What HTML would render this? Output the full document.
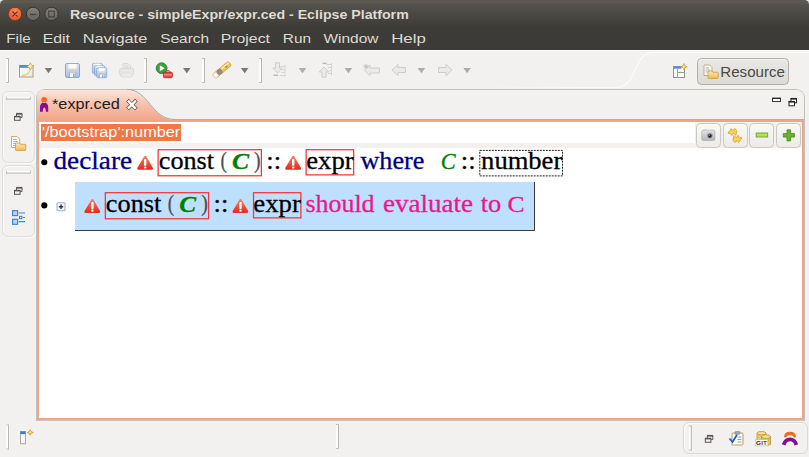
<!DOCTYPE html>
<html><head><meta charset="utf-8">
<style>
*{box-sizing:border-box;margin:0;padding:0}
html,body{width:809px;height:457px;overflow:hidden;background:#f2f1f0;font-family:"Liberation Sans",sans-serif;}
.a{position:absolute}
svg text{white-space:pre}
</style></head><body>
<!-- title + menu -->
<div class="a" style="left:0;top:0;width:809px;height:30px;background:#e6e6e6"></div>
<div class="a" style="left:0;top:0;width:809px;height:28px;background:linear-gradient(#58564f 0,#5d5b54 6%,#55534d 14%,#4b4a44 45%,#403f3a 82%,#3c3b37 100%);border-radius:4.500px 4.500px 0 0"></div>
<div class="a" style="left:0;top:28px;width:809px;height:22px;background:#3c3b37"></div>
<!-- toolbar -->
<div class="a" style="left:0;top:50px;width:809px;height:40px;background:#f2f1f0;border-top:1px solid #fbfbfb"></div>
<div class="a" style="left:440px;top:86.500px;width:180px;height:1.300px;background:linear-gradient(90deg,rgba(253,253,253,0) 20%,rgba(253,253,253,0.8) 90%)"></div>
<!-- left trim boxes -->
<div class="a" style="left:2px;top:91px;width:33px;height:72px;border:1px solid #dfddd9;border-radius:6px;box-shadow:inset 1px 1px 0 #fafafa,1px 1px 0 #fafafa"></div>
<div class="a" style="left:2px;top:165px;width:33px;height:72px;border:1px solid #dfddd9;border-radius:6px;box-shadow:inset 1px 1px 0 #fafafa,1px 1px 0 #fafafa"></div>
<!-- editor panel -->
<div class="a" style="left:36px;top:89px;width:769px;height:331.500px;border:1px solid #c3c0ba;border-bottom:1px solid #c9c6c0;border-radius:9px 9px 0 0;background:#f2f1f0"></div>
<div class="a" style="left:37px;top:90px;width:767px;height:31px;border-radius:8px 8px 0 0;background:#f2f1f0"></div>
<!-- active tab -->
<svg class="a" style="left:37px;top:89px" width="150" height="32">
 <defs><linearGradient id="tg" x1="0" y1="0" x2="0" y2="1"><stop offset="0" stop-color="#fce6dc"/><stop offset="0.5" stop-color="#f6bfa8"/><stop offset="1" stop-color="#f2a487"/></linearGradient></defs>
 <path d="M0 32 V9 Q0 1 8 1 H90 C112 1 114 31 138 31 L150 32 Z" fill="url(#tg)"/>
 <path d="M90 0.500 C112 0.500 114 30.500 138 30.500" fill="none" stroke="#aba8a2" stroke-width="1"/>
</svg>
<div class="a" style="left:172px;top:119.200px;width:632px;height:0.800px;background:#b3b0aa"></div>
<div class="a" style="left:37px;top:119.900px;width:767.300px;height:299.700px;border:2.300px solid #f2a487;border-top-width:2.100px;background:#fff"></div>
<!-- path row -->
<div class="a" style="left:39px;top:122px;width:763px;height:26.400px;background:#f2f1f0"></div>
<div class="a" style="left:39px;top:122px;width:656px;height:21px;background:#fff"></div>
<div class="a" style="left:41px;top:124px;width:140px;height:17px;background:#f07746"></div>
<!-- view buttons -->
<div class="a" style="left:696px;top:123px;width:25px;height:25px;border:1px solid #cbc8c2;border-radius:4.500px;background:linear-gradient(#f9f9f8,#ecebe8)"></div><div class="a" style="left:723px;top:123px;width:25px;height:25px;border:1px solid #cbc8c2;border-radius:4.500px;background:linear-gradient(#f9f9f8,#ecebe8)"></div><div class="a" style="left:749px;top:123px;width:25px;height:25px;border:1px solid #cbc8c2;border-radius:4.500px;background:linear-gradient(#f9f9f8,#ecebe8)"></div><div class="a" style="left:776px;top:123px;width:25px;height:25px;border:1px solid #cbc8c2;border-radius:4.500px;background:linear-gradient(#f9f9f8,#ecebe8)"></div>
<!-- resource button -->
<div class="a" style="left:697px;top:58px;width:92px;height:27px;border:1px solid #b3b0a9;border-radius:4.500px;background:linear-gradient(#e9e8e5,#dddbd7);box-shadow:inset 0 1px 0 #f3f2f0"></div>
<!-- content boxes -->
<div class="a" style="left:75px;top:182px;width:460px;height:48.600px;background:#bfdfff;border-right:1.300px solid #3a3a3a;border-bottom:1.600px solid #3a3a3a"></div>
<!-- status trim -->
<div class="a" style="left:683px;top:422px;width:125px;height:32px;border:1px solid #dcdad6;border-radius:6px;box-shadow:inset 1px 1px 0 #fafafa"></div>
<svg class="a" style="left:0;top:0" width="809" height="457" viewBox="0 0 809 457">
<rect x="158.12" y="149.72" width="103.25" height="26.05" fill="none" stroke="#f83232" stroke-width="1.25"/>
<rect x="306.12" y="149.72" width="47.55" height="25.15" fill="none" stroke="#f83232" stroke-width="1.25"/>
<rect x="105.33" y="192.72" width="103.25" height="26.05" fill="none" stroke="#f83232" stroke-width="1.25"/>
<rect x="253.53" y="192.72" width="47.35" height="25.15" fill="none" stroke="#f83232" stroke-width="1.25"/>
<rect x="479.800" y="150.400" width="82.700" height="25.500" fill="none" stroke="#222" stroke-width="1" stroke-dasharray="2 1"/>
<circle cx="44.3" cy="162.2" r="3.05" fill="#000"/>
<circle cx="44.3" cy="205.4" r="3.05" fill="#000"/>
<text x="69.99" y="19.3" textLength="338.76" lengthAdjust="spacingAndGlyphs" font-family="Liberation Sans" font-size="13.5" font-weight="bold" font-style="normal" fill="#dfdbd2">Resource - simpleExpr/expr.ced - Eclipse Platform</text>
<text x="6.25" y="42.9" textLength="24.54" lengthAdjust="spacingAndGlyphs" font-family="Liberation Sans" font-size="13.4" font-weight="normal" font-style="normal" fill="#dfdbd2">File</text>
<text x="42.69" y="42.9" textLength="27.31" lengthAdjust="spacingAndGlyphs" font-family="Liberation Sans" font-size="13.4" font-weight="normal" font-style="normal" fill="#dfdbd2">Edit</text>
<text x="82.71" y="42.9" textLength="64.57" lengthAdjust="spacingAndGlyphs" font-family="Liberation Sans" font-size="13.4" font-weight="normal" font-style="normal" fill="#dfdbd2">Navigate</text>
<text x="160.22" y="42.9" textLength="48.82" lengthAdjust="spacingAndGlyphs" font-family="Liberation Sans" font-size="13.4" font-weight="normal" font-style="normal" fill="#dfdbd2">Search</text>
<text x="220.72" y="42.9" textLength="49.28" lengthAdjust="spacingAndGlyphs" font-family="Liberation Sans" font-size="13.4" font-weight="normal" font-style="normal" fill="#dfdbd2">Project</text>
<text x="282.89" y="42.9" textLength="28.19" lengthAdjust="spacingAndGlyphs" font-family="Liberation Sans" font-size="13.4" font-weight="normal" font-style="normal" fill="#dfdbd2">Run</text>
<text x="323.5" y="42.9" textLength="55.0" lengthAdjust="spacingAndGlyphs" font-family="Liberation Sans" font-size="13.4" font-weight="normal" font-style="normal" fill="#dfdbd2">Window</text>
<text x="391.17" y="42.9" textLength="34.63" lengthAdjust="spacingAndGlyphs" font-family="Liberation Sans" font-size="13.4" font-weight="normal" font-style="normal" fill="#dfdbd2">Help</text>
<text x="52.04" y="109.0" textLength="67.82" lengthAdjust="spacingAndGlyphs" font-family="Liberation Sans" font-size="14.1" font-weight="normal" font-style="normal" fill="#1c1c1c">*expr.ced</text>
<text x="41.94" y="136.6" textLength="138.31" lengthAdjust="spacingAndGlyphs" font-family="Liberation Sans" font-size="13.8" font-weight="normal" font-style="normal" fill="#ffffff">'/bootstrap':number</text>
<text x="720.37" y="76.8" textLength="64.46" lengthAdjust="spacingAndGlyphs" font-family="Liberation Sans" font-size="13.8" font-weight="normal" font-style="normal" fill="#4a4843">Resource</text>
<text x="53.48" y="168.9" textLength="78.6" lengthAdjust="spacingAndGlyphs" font-family="Liberation Serif" font-size="24.5" font-weight="normal" font-style="normal" fill="#00007f" stroke="#00007f" stroke-width="0.28">declare</text>
<text x="158.78" y="168.9" textLength="55.23" lengthAdjust="spacingAndGlyphs" font-family="Liberation Serif" font-size="24.5" font-weight="normal" font-style="normal" fill="#000" stroke="#000" stroke-width="0.28">const</text>
<text x="220.51" y="167.6" textLength="6.35" lengthAdjust="spacingAndGlyphs" font-family="Liberation Serif" font-size="22.3" font-weight="normal" font-style="normal" fill="#4d4d4d" stroke="#4d4d4d" stroke-width="0.28">(</text>
<text x="231.91" y="169.1" textLength="17.13" lengthAdjust="spacingAndGlyphs" font-family="Liberation Serif" font-size="22.8" font-weight="bold" font-style="italic" fill="#008000" stroke="#008000" stroke-width="0.28">C</text>
<text x="254.05" y="167.6" textLength="6.58" lengthAdjust="spacingAndGlyphs" font-family="Liberation Serif" font-size="22.3" font-weight="normal" font-style="normal" fill="#4d4d4d" stroke="#4d4d4d" stroke-width="0.28">)</text>
<text x="266.32" y="168.9" textLength="14.78" lengthAdjust="spacingAndGlyphs" font-family="Liberation Serif" font-size="24.5" font-weight="normal" font-style="normal" fill="#000" stroke="#000" stroke-width="0.28">::</text>
<text x="306.27" y="168.9" textLength="47.33" lengthAdjust="spacingAndGlyphs" font-family="Liberation Serif" font-size="24.5" font-weight="normal" font-style="normal" fill="#000" stroke="#000" stroke-width="0.28">expr</text>
<text x="360.45" y="168.9" textLength="63.91" lengthAdjust="spacingAndGlyphs" font-family="Liberation Serif" font-size="24.5" font-weight="normal" font-style="normal" fill="#00007f" stroke="#00007f" stroke-width="0.28">where</text>
<text x="440.78" y="169.1" textLength="14.95" lengthAdjust="spacingAndGlyphs" font-family="Liberation Serif" font-size="22.8" font-weight="normal" font-style="italic" fill="#008000" stroke="#008000" stroke-width="0.28">C</text>
<text x="460.89" y="168.9" textLength="14.91" lengthAdjust="spacingAndGlyphs" font-family="Liberation Serif" font-size="24.5" font-weight="normal" font-style="normal" fill="#000" stroke="#000" stroke-width="0.28">::</text>
<text x="481.14" y="168.9" textLength="81.11" lengthAdjust="spacingAndGlyphs" font-family="Liberation Serif" font-size="24.5" font-weight="normal" font-style="normal" fill="#000" stroke="#000" stroke-width="0.28">number</text>
<text x="105.83" y="212.0" textLength="55.47" lengthAdjust="spacingAndGlyphs" font-family="Liberation Serif" font-size="24.5" font-weight="normal" font-style="normal" fill="#000" stroke="#000" stroke-width="0.28">const</text>
<text x="167.79" y="210.7" textLength="6.35" lengthAdjust="spacingAndGlyphs" font-family="Liberation Serif" font-size="22.3" font-weight="normal" font-style="normal" fill="#4d4d4d" stroke="#4d4d4d" stroke-width="0.28">(</text>
<text x="179.23" y="212.2" textLength="16.87" lengthAdjust="spacingAndGlyphs" font-family="Liberation Serif" font-size="22.8" font-weight="bold" font-style="italic" fill="#008000" stroke="#008000" stroke-width="0.28">C</text>
<text x="201.33" y="210.7" textLength="6.67" lengthAdjust="spacingAndGlyphs" font-family="Liberation Serif" font-size="22.3" font-weight="normal" font-style="normal" fill="#4d4d4d" stroke="#4d4d4d" stroke-width="0.28">)</text>
<text x="213.59" y="212.0" textLength="14.78" lengthAdjust="spacingAndGlyphs" font-family="Liberation Serif" font-size="24.5" font-weight="normal" font-style="normal" fill="#000" stroke="#000" stroke-width="0.28">::</text>
<text x="253.32" y="212.0" textLength="47.58" lengthAdjust="spacingAndGlyphs" font-family="Liberation Serif" font-size="24.5" font-weight="normal" font-style="normal" fill="#000" stroke="#000" stroke-width="0.28">expr</text>
<text x="305.48" y="212.0" textLength="69.07" lengthAdjust="spacingAndGlyphs" font-family="Liberation Serif" font-size="24.5" font-weight="normal" font-style="normal" fill="#f0148c" stroke="#f0148c" stroke-width="0.28">should</text>
<text x="382.98" y="212.0" textLength="89.94" lengthAdjust="spacingAndGlyphs" font-family="Liberation Serif" font-size="24.5" font-weight="normal" font-style="normal" fill="#f0148c" stroke="#f0148c" stroke-width="0.28">evaluate</text>
<text x="480.73" y="212.0" textLength="20.53" lengthAdjust="spacingAndGlyphs" font-family="Liberation Serif" font-size="24.5" font-weight="normal" font-style="normal" fill="#f0148c" stroke="#f0148c" stroke-width="0.28">to</text>
<text x="507.49" y="212.2" textLength="17.12" lengthAdjust="spacingAndGlyphs" font-family="Liberation Serif" font-size="22.8" font-weight="normal" font-style="normal" fill="#f0148c" stroke="#f0148c" stroke-width="0.28">C</text>
<defs>
 <radialGradient id="gClose" cx="0.5" cy="0.3" r="0.8"><stop offset="0" stop-color="#f58a5c"/><stop offset="1" stop-color="#dd4f20"/></radialGradient>
 <linearGradient id="gBtn" x1="0" y1="0" x2="0" y2="1"><stop offset="0" stop-color="#838179"/><stop offset="1" stop-color="#65635c"/></linearGradient>
 <linearGradient id="gWarn" x1="0" y1="0" x2="0" y2="1"><stop offset="0" stop-color="#f67a66"/><stop offset="1" stop-color="#e6301f"/></linearGradient>
 <linearGradient id="gFloppy" x1="0" y1="0" x2="0" y2="1"><stop offset="0" stop-color="#dbe4f4"/><stop offset="1" stop-color="#a8bfe5"/></linearGradient>
 <linearGradient id="gFolder" x1="0" y1="0" x2="0" y2="1"><stop offset="0" stop-color="#fdeab0"/><stop offset="1" stop-color="#efbd52"/></linearGradient>
 <linearGradient id="gWin" x1="0" y1="0" x2="1" y2="1"><stop offset="0" stop-color="#ffffff"/><stop offset="1" stop-color="#d9e6f8"/></linearGradient>
 <g id="dd"><path d="M0 0 H7.6 L3.8 5.2 Z"/></g>
 <g id="handle"><rect x="0" y="0" width="2" height="25" fill="#fdfdfd"/><rect x="2" y="0" width="1" height="25" fill="#b9b6b0"/><rect x="0" y="0" width="3" height="1" fill="#c4c1bb"/><rect x="0" y="24" width="3" height="1" fill="#c4c1bb"/></g>
 <g id="warn"><path d="M8.300 1.800 L14.800 13.200 H1.600 Z" fill="url(#gWarn)" stroke="url(#gWarn)" stroke-width="2.600" stroke-linejoin="round"/><rect x="7.100" y="3.600" width="2.400" height="6.800" rx="0.900" fill="#fff"/><rect x="7.100" y="11.100" width="2.400" height="2.100" rx="0.900" fill="#fff"/></g>
 <g id="restore" fill="none" stroke="#5b564e"><path d="M2.5 3 V0.8 H8 V4.5 H6.5" stroke-width="1"/><path d="M2.2 0.7 H8.3" stroke-width="1.6"/><rect x="0.5" y="3.5" width="5.6" height="3.8" stroke-width="1" fill="#f2f1f0"/><path d="M0.2 3.6 H6.4" stroke-width="1.6"/></g>
 <g id="hhandle"><rect x="0" y="0" width="25" height="2" fill="#fdfdfd"/><rect x="0" y="1.800" width="25" height="1" fill="#b9b6b0"/><rect x="0" y="0" width="1" height="2.500" fill="#c4c1bb"/><rect x="24" y="0" width="1" height="2.500" fill="#c4c1bb"/></g>
 <g id="cedicon"><ellipse cx="4.300" cy="2.900" rx="2.800" ry="2.800" fill="#f96a12"/><path d="M0.200 14.900 V10.500 C0.200 7.200 1.900 5.600 4.300 5.600 C6.700 5.600 8.400 7.200 8.400 10.500 V14.900 H6.100 C6.100 12.500 5.400 10.700 4.500 10.700 C3.600 10.700 3 12.500 3 14.900 Z" fill="#860d96"/><circle cx="4.300" cy="5.600" r="0.700" fill="#fbe0d4"/></g>
 <g id="floppy"><rect x="0.5" y="0.5" width="14" height="14" rx="1.6" fill="url(#gFloppy)" stroke="#7c9dd0" stroke-width="0.900"/><rect x="3.500" y="0.9" width="8" height="6" fill="#fbfcfe"/><rect x="3.5" y="5.6" width="8" height="1.2" fill="#e6cf9c"/><rect x="4.6" y="9.3" width="6" height="5" fill="#f4f7fc" stroke="#7c9ccc" stroke-width="0.6"/><rect x="8" y="10.6" width="1.6" height="3.4" fill="#8aa6d4"/><rect x="4.6" y="9.3" width="6" height="1" fill="#e6cf9c"/></g>
</defs>
<!-- window buttons -->
<circle cx="15" cy="13.900" r="6.700" fill="url(#gClose)" stroke="#8f3415" stroke-width="1"/>
<path d="M12.800 11.800 L17.200 16.200 M17.200 11.800 L12.800 16.200" stroke="#6e2a12" stroke-width="1.200" stroke-linecap="round"/>
<circle cx="33.100" cy="13.900" r="6.700" fill="url(#gBtn)" stroke="#34332f" stroke-width="1"/>
<path d="M30 14.5 H36.200" stroke="#46443f" stroke-width="1.500"/>
<circle cx="51.500" cy="13.900" r="6.700" fill="url(#gBtn)" stroke="#34332f" stroke-width="1"/>
<rect x="48.700" y="11.200" width="5.600" height="5.600" fill="none" stroke="#46443f" stroke-width="1.200"/>
<!-- toolbar handles -->
<use href="#handle" x="6" y="58"/><use href="#handle" x="144" y="58"/><use href="#handle" x="202" y="58"/><use href="#handle" x="259" y="58"/>
<!-- new wizard -->
<g transform="translate(19,63)">
 <rect x="0.500" y="2.500" width="13.500" height="11.500" fill="url(#gWin)" stroke="#b79a78" stroke-width="1"/>
 <rect x="0.500" y="2.200" width="10" height="2.600" fill="#4a8ad0"/>
 <path d="M3 12.500 C8 12.500 11 9 11.600 4.500" fill="none" stroke="#f4cf58" stroke-width="1.300"/>
 <path d="M11.400 -0.200 L12.600 2.200 L15 3.400 L12.600 4.600 L11.400 7 L10.200 4.600 L7.800 3.400 L10.200 2.200 Z" fill="#fdf0b8" stroke="#cf9f34" stroke-width="0.800"/>
</g>
<use href="#dd" x="44.700" y="68" fill="#7a7872"/>
<!-- save / save all / print -->
<use href="#floppy" x="65" y="63"/>
<g transform="translate(92,63)"><g transform="scale(0.72)"><use href="#floppy" x="0" y="0"/><use href="#floppy" x="3" y="3"/><use href="#floppy" x="6" y="6"/></g></g>
<g transform="translate(119,63)" opacity="0.85">
 <path d="M4 0.500 H9 L11.500 3 V7 H4 Z" fill="#e9e8e6" stroke="#d2d0cc" stroke-width="0.800"/>
 <rect x="0.500" y="5.500" width="14" height="6.500" rx="1.500" fill="#e7e6e3" stroke="#d3d1cd" stroke-width="0.800"/>
 <rect x="2" y="10" width="11" height="4" rx="1" fill="#ecebe9" stroke="#d6d4d0" stroke-width="0.700"/>
 <path d="M5.500 3 H9.500 M5.500 4.800 H9.500" stroke="#cfcdc9" stroke-width="0.700"/>
</g>
<!-- run external tools -->
<circle cx="161.600" cy="68.200" r="5.400" fill="#3fa043" stroke="#2a7a2e" stroke-width="0.900"/>
<path d="M159.800 65.200 L164.600 68.200 L159.800 71.200 Z" fill="#fff"/>
<g transform="translate(163,70.500)"><rect x="2.800" y="0.300" width="4" height="2.500" rx="0.800" fill="none" stroke="#b8282a" stroke-width="1"/><rect x="0.400" y="1.800" width="9" height="5.400" rx="1" fill="#e0484a" stroke="#b8282a" stroke-width="0.800"/><rect x="0.800" y="3.900" width="8.200" height="0.900" fill="#f6b0b0"/></g>
<use href="#dd" x="183" y="68" fill="#7a7872"/>
<!-- torch -->
<g transform="translate(221.800,70) rotate(-40)">
 <rect x="-10" y="-2.600" width="20.500" height="5.200" rx="1.600" fill="#f3c64e" stroke="#c89a2e" stroke-width="0.700"/>
 <rect x="-10" y="-2.600" width="4.200" height="5.200" rx="1.300" fill="#fbf6ea" stroke="#d8c79a" stroke-width="0.500"/>
 <ellipse cx="-2.800" cy="0" rx="2.900" ry="2.900" fill="#8f8e8a"/>
 <rect x="0.300" y="-1.900" width="9.500" height="1.400" fill="#fdeeb0"/>
 <rect x="4.500" y="-0.300" width="2.200" height="1.400" fill="#5f86c4"/>
</g>
<use href="#dd" x="240.900" y="68" fill="#7a7872"/>
<!-- next/prev annotation (disabled) -->
<g fill="#eceae8" stroke="#cbc9c5" stroke-width="0.900" stroke-linejoin="round">
 <path d="M275.500 62.800 H279.500 V68 H282.200 L277.500 73 L272.800 68 H275.500 Z"/>
 <path d="M322 77.200 H326 V72 H328.700 L324 67 L319.300 72 H322 Z"/>
 <path d="M364.500 70.300 L370 65 V68 H379.500 V73 H370 V75.600 Z"/>
 <path d="M392 70 L398 64.500 V67.500 H405.500 V72.500 H398 V75.500 Z"/>
 <path d="M452 70 L446 64.500 V67.500 H438.500 V72.500 H446 V75.500 Z"/>
</g>
<g stroke="#d2d0cc" stroke-width="0.900" fill="none">
 <path d="M285 64.500 V77 M280.500 66.500 H284.500 M281.500 69.500 H284.500 M281.500 72.500 H284.500 M279.500 75.500 H284.500"/>
 <path d="M273.500 75.200 H278" stroke="#b5b3ae" stroke-width="1.300"/>
 <path d="M331.500 63 V75.500 M326.500 64.500 H331 M328 67.500 H331 M329.500 70.500 H331 M328 73.500 H331"/>
 <path d="M322.500 63.300 H326.500" stroke="#b5b3ae" stroke-width="1.300"/>
 <path d="M364 64.500 L368 68.500 M368 64.500 L364 68.500 M366 63.800 V69.200 M363.500 66.500 H368.500" stroke="#bdbbb6" stroke-width="0.800"/>
</g>
<use href="#dd" x="298.700" y="68" fill="#aeaca7"/>
<use href="#dd" x="344.600" y="68" fill="#aeaca7"/>
<use href="#dd" x="417.600" y="68" fill="#aeaca7"/>
<use href="#dd" x="463.300" y="68" fill="#aeaca7"/>
<!-- perspective curve -->
<path d="M617 87.200 C638 87.200 632 52.400 654 52.400 H809" fill="none" stroke="#fdfdfd" stroke-width="1.200" stroke-opacity="0.850"/>
<!-- open perspective -->
<g transform="translate(673,64)">
 <rect x="0.500" y="2.500" width="11" height="11" fill="#fff" stroke="#96928a" stroke-width="1"/>
 <rect x="0.500" y="2.300" width="8" height="2.400" fill="#5b8ed0"/>
 <path d="M4.500 5 V13.500 M4.500 8.500 H11.500" stroke="#a39f97" stroke-width="1"/>
 <path d="M11 -0.500 L12 1.800 L14.300 2.800 L12 3.800 L11 6.100 L10 3.800 L7.700 2.800 L10 1.800 Z" fill="#f9df7e" stroke="#c7972e" stroke-width="0.700"/>
</g>
<!-- resource perspective icon -->
<g id="resicon" transform="translate(703.500,64.500)">
 <path d="M0.500 0.500 H6 L8.500 3 V11 H0.500 Z" fill="#fdfdfd" stroke="#c3a46a" stroke-width="0.900"/>
 <path d="M2 3.500 H5.500 M2 5.500 H6.500 M2 7.500 H4" stroke="#7ea2d8" stroke-width="0.800"/>
 <path d="M4.500 6.500 H8.500 L9.500 7.800 H14 Q14.800 7.800 14.800 8.600 V13.200 Q14.800 14 14 14 H5.300 Q4.500 14 4.500 13.200 Z" fill="url(#gFolder)" stroke="#c99a3c" stroke-width="0.800"/>
</g>
<!-- min / max of editor area -->
<rect x="772.500" y="98.500" width="8" height="3" fill="#fff" stroke="#333" stroke-width="1"/>
<path d="M772 98.300 H781" stroke="#222" stroke-width="1.300"/>
<g transform="translate(788.500,98)"><rect x="2.500" y="0.800" width="5.500" height="4" fill="#fff" stroke="#222" stroke-width="1"/><path d="M2 0.700 H8.500" stroke="#222" stroke-width="1.500"/><rect x="0.500" y="3.800" width="5.500" height="4" fill="#fff" stroke="#222" stroke-width="1"/><path d="M0 3.700 H6.500" stroke="#222" stroke-width="1.500"/></g>
<!-- left trim -->
<use href="#hhandle" x="6" y="96.800"/><use href="#hhandle" x="6" y="170.800"/>
<use href="#restore" x="14" y="113"/><use href="#restore" x="14" y="187"/>
<g transform="translate(11,136)">
 <path d="M0.500 0.500 H6 L8.800 3.300 V11.500 H0.500 Z" fill="#fdfdfd" stroke="#c3a46a" stroke-width="0.900"/>
 <path d="M2 3.500 H5.500 M2 5.500 H6.500 M2 7.500 H4.500 M2 9.500 H4" stroke="#7ea2d8" stroke-width="0.800"/>
 <path d="M4.500 7 H8.500 L9.600 8.300 H14 Q14.800 8.300 14.800 9.100 V13.700 Q14.800 14.500 14 14.500 H5.300 Q4.500 14.500 4.500 13.700 Z" fill="url(#gFolder)" stroke="#c99a3c" stroke-width="0.800"/>
</g>
<g transform="translate(12,210)">
 <rect x="0.600" y="0.600" width="5" height="5" fill="#b9d6f5" stroke="#3f86d6" stroke-width="1.200"/>
 <rect x="0.600" y="9.300" width="5" height="5" fill="#b9d6f5" stroke="#3f86d6" stroke-width="1.200"/>
 <rect x="7.500" y="6.300" width="2.400" height="2.400" fill="#e6f0fb" stroke="#2f6fc0" stroke-width="0.900"/>
 <path d="M6.800 3 H13 M10.800 7.500 H13 M6.800 11.700 H13" stroke="#3f86d6" stroke-width="1.200"/>
</g>
<!-- tab icon, close -->
<use href="#cedicon" x="39.800" y="96.800"/>
<path d="M128.700 101.400 L135.100 107.800 M135.100 101.400 L128.700 107.800" stroke="#4a3a34" stroke-width="3.600" stroke-linecap="square"/>
<path d="M128.700 101.400 L135.100 107.800 M135.100 101.400 L128.700 107.800" stroke="#fff" stroke-width="2.400" stroke-linecap="square"/>
<!-- view toolbar icons -->
<g transform="translate(701.400,129.400)">
 <defs><linearGradient id="gCam" x1="0" y1="0" x2="0" y2="1"><stop offset="0" stop-color="#e4e4e4"/><stop offset="1" stop-color="#b4b4b4"/></linearGradient></defs>
 <rect x="0.300" y="0.800" width="13.200" height="10.400" rx="1.600" fill="url(#gCam)" stroke="#a8a8a8" stroke-width="0.600"/>
 <rect x="1.600" y="0" width="3.600" height="1.400" rx="0.500" fill="#c8c8c8"/>
 <circle cx="8.400" cy="6.400" r="3.300" fill="#9a9a9a" stroke="#d8d8d8" stroke-width="0.600"/><circle cx="8.400" cy="6.400" r="1.900" fill="#1a2436"/><circle cx="7.800" cy="5.800" r="0.600" fill="#cfd8ea"/>
 <rect x="11.400" y="8.800" width="1.400" height="1.300" fill="#e8b84a"/>
</g>
<g fill="#f9cf55" stroke="#d09a2c" stroke-width="0.700" stroke-linejoin="round">
 <path d="M727.900 133.200 L731.200 128.600 L732.600 130.400 L735.200 128.500 L737 131.200 L735.800 135.400 L733.600 133.200 L731.800 135.600 L730.400 133.600 Z"/>
 <path d="M742 137.800 L738.700 142.600 L737.300 140.800 L734.700 142.600 L732.900 139.800 L734.100 135.600 L736.300 137.800 L738.100 135.400 L739.500 137.400 Z"/>
</g>
<rect x="756.200" y="133" width="11.500" height="4" fill="#c3d84c" stroke="#62a83a" stroke-width="0.900"/>
<path d="M787 129.800 H790.600 V133.500 H794.400 V137.100 H790.600 V140.900 H787 V137.100 H783.300 V133.500 H787 Z" fill="#6cb030" stroke="#4a8a1c" stroke-width="0.800"/>
<!-- warnings -->
<use href="#warn" x="136.900" y="155.300"/><use href="#warn" x="284.900" y="155.300"/>
<use href="#warn" x="84.100" y="198.500"/><use href="#warn" x="232.200" y="198.500"/>
<!-- expand -->
<rect x="57" y="202.800" width="8" height="8" rx="1" fill="#f6f8fb" stroke="#9db3cf" stroke-width="1.100"/>
<path d="M58.800 206.800 H63.200 M61 204.600 V209" stroke="#3a3a3a" stroke-width="1.500"/>
<!-- status bar -->
<use href="#handle" x="6" y="424.500"/>
<use href="#handle" x="336" y="424"/>
<use href="#handle" x="688.800" y="425.500"/>
<g transform="translate(20,431)">
 <rect x="0.500" y="0.500" width="5" height="12.300" fill="#f4f7fc" stroke="#a7a49c" stroke-width="0.900"/>
 <rect x="0.500" y="0.500" width="5" height="2.600" fill="#3f78c4"/>
 <path d="M10.200 -1.300 L11.100 0.600 L13.300 1.500 L11.100 2.400 L10.200 4.300 L9.300 2.400 L7.100 1.500 L9.300 0.600 Z" fill="#f9df7e" stroke="#c7972e" stroke-width="0.800"/>
</g>
<use href="#restore" x="704.800" y="435"/>
<g transform="translate(729,431)">
 <rect x="3" y="2" width="11" height="12" rx="1" fill="#fbfbf8" stroke="#c49a5a" stroke-width="1"/>
 <rect x="6" y="0.500" width="5" height="2.800" rx="0.800" fill="#9aa6b8" stroke="#6e7a8c" stroke-width="0.500"/>
 <path d="M8.500 6 H12.500 M8.500 8.500 H12.500 M8.500 11 H12.500" stroke="#8a97ad" stroke-width="0.900"/>
 <path d="M0.500 7.500 L3.500 11 L8 3.800" fill="none" stroke="#1f5fc0" stroke-width="1.700"/>
</g>
<g transform="translate(755,431)">
 <path d="M2 2.200 V10 H11 V2.200 Z" fill="#ecc968" stroke="#bb922f" stroke-width="0.800"/>
 <ellipse cx="6.500" cy="2.200" rx="4.500" ry="1.700" fill="#f7e09a" stroke="#bb922f" stroke-width="0.800"/>
 <path d="M6.500 5.600 V13.500 Q11 15.500 15.500 13.500 V5.600 Z" fill="#e9c25a" stroke="#bb922f" stroke-width="0.800"/>
 <ellipse cx="11" cy="5.600" rx="4.500" ry="1.800" fill="#f7e09a" stroke="#bb922f" stroke-width="0.800"/>
 <path d="M8.600 7.800 V9.800 H13.400 V7.800" fill="none" stroke="#c9a040" stroke-width="0.800"/>
 <rect x="0.300" y="8.700" width="12.500" height="6.200" fill="#fdfdfd" stroke="#b7bccb" stroke-width="0.600"/>
 <text x="1.100" y="14" font-family="Liberation Sans" font-size="6.200" font-weight="bold" fill="#222" textLength="10.800" lengthAdjust="spacingAndGlyphs">G<tspan fill="#c02020">I</tspan><tspan fill="#1f7a1f">T</tspan></text>
</g>
<g transform="translate(782,431)">
 <path d="M3.400 5.200 C4.200 1 11.800 1 12.600 5.200" fill="none" stroke="#f96a12" stroke-width="2.700" stroke-linecap="round"/>
 <path d="M3.800 5 C5 2.800 11 2.800 12.200 5 C10 3.900 6 3.900 3.800 5 Z" fill="#f96a12"/>
 <path d="M1.600 13.800 C3 9.600 5.400 8.300 8 8.300 C10.600 8.300 13 9.600 14.400 13.800" fill="none" stroke="#860d96" stroke-width="3.800"/>
</g>

</svg>
</body></html>
